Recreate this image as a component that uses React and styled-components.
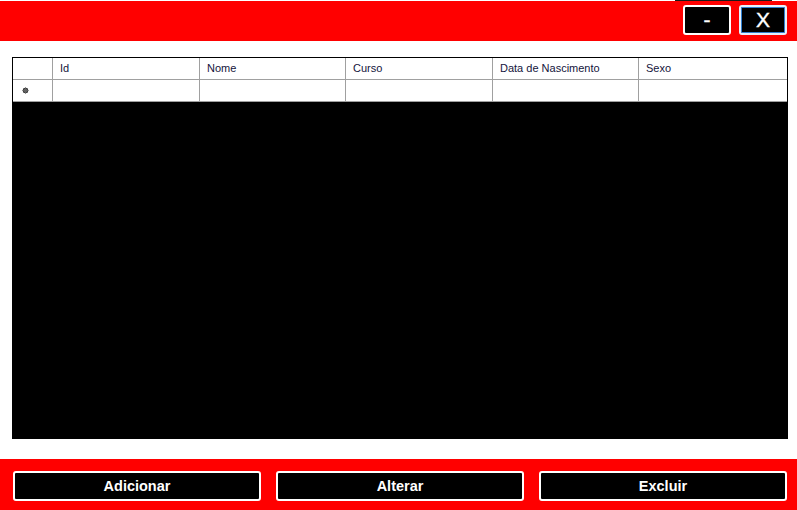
import React from 'react'
import styled, { createGlobalStyle } from 'styled-components'

const GlobalStyle = createGlobalStyle`
  html, body {
    margin: 0;
    padding: 0;
    background: #ffffff;
    font-family: 'Liberation Sans', Arial, sans-serif;
  }
`

const columns = ['Id', 'Nome', 'Curso', 'Data de Nascimento', 'Sexo']
const actions = ['Adicionar', 'Alterar', 'Excluir']

const App = () => {
  return (
    <S.Window>
      <GlobalStyle />
      <S.TopEdge>
        <S.EdgeMark />
      </S.TopEdge>
      <S.TitleBar>
        <S.WindowButton>-</S.WindowButton>
        <S.WindowButton focused>X</S.WindowButton>
      </S.TitleBar>

      <S.Grid>
        <S.Row header>
          <S.RowHeader />
          {columns.map((col) => (
            <S.Cell key={col} header>{col}</S.Cell>
          ))}
        </S.Row>
        <S.Row>
          <S.RowHeader>
            <svg width='7' height='7' viewBox='0 0 7 7'>
              <circle cx='3.5' cy='3.5' r='2.7' fill='#3a3a3a' />
              <path d='M3.5 0.3v6.4M0.3 3.5h6.4M1.3 1.3l4.4 4.4M5.7 1.3l-4.4 4.4' stroke='#666' strokeWidth='0.9' />
            </svg>
          </S.RowHeader>
          {columns.map((col) => (
            <S.Cell key={col} />
          ))}
        </S.Row>
      </S.Grid>

      <S.ActionBar>
        {actions.map((label) => (
          <S.ActionButton key={label}>{label}</S.ActionButton>
        ))}
      </S.ActionBar>
    </S.Window>
  )
}

const S = {
  Window: styled.div`
    width: 797px;
    height: 510px;
    display: flex;
    flex-direction: column;
    background: #ffffff;
    overflow: hidden;
  `,
  TopEdge: styled.div`
    height: 1px;
    display: flex;
  `,
  EdgeMark: styled.div`
    margin-left: 675px;
    width: 97px;
    height: 1px;
    background: #1a1a1a;
  `,
  TitleBar: styled.div`
    height: 40px;
    box-sizing: border-box;
    background: #ff0000;
    display: flex;
    justify-content: flex-end;
    align-items: flex-start;
    gap: 8px;
    padding: 4px 10px 0 0;
  `,
  WindowButton: styled.div`
    width: 48px;
    height: 30px;
    box-sizing: border-box;
    background: #000000;
    border: 2px solid ${(p) => (p.focused ? '#e6f1fc' : '#ffffff')};
    box-shadow: ${(p) => (p.focused ? 'inset 0 0 0 1px #2f7fd0' : 'none')};
    border-radius: 3px;
    color: #ffffff;
    font-size: 21px;
    line-height: 25px;
    text-align: center;
    -webkit-text-stroke: 0.4px #ffffff;
  `,
  Grid: styled.div`
    margin: 16px 0 0 12px;
    width: 776px;
    height: 382px;
    box-sizing: border-box;
    background: #000000;
    border: 1px solid #000000;
    display: flex;
    flex-direction: column;
  `,
  Row: styled.div`
    display: grid;
    grid-template-columns: 40px 147px 146px 147px 146px 148px;
    height: 21px;
    background: #ffffff;
    border-bottom: 1px solid #a0a0a0;
  `,
  RowHeader: styled.div`
    border-right: 1px solid #a0a0a0;
    display: flex;
    align-items: center;
    padding-left: 9px;
  `,
  Cell: styled.div`
    border-right: 1px solid #a0a0a0;
    padding-left: 7px;
    font-size: 11px;
    line-height: 21px;
    color: #14143c;
    white-space: nowrap;
    overflow: hidden;

    &:last-child {
      border-right: none;
    }
  `,
  ActionBar: styled.div`
    margin-top: 20px;
    height: 51px;
    box-sizing: border-box;
    background: #ff0000;
    display: flex;
    gap: 15px;
    padding: 12px 0 0 13px;
  `,
  ActionButton: styled.div`
    width: 248px;
    height: 30px;
    box-sizing: border-box;
    background: #000000;
    border: 2px solid #ffffff;
    border-radius: 3px;
    color: #ffffff;
    font-size: 14.5px;
    font-weight: bold;
    line-height: 26px;
    text-align: center;
  `
}

export default App
